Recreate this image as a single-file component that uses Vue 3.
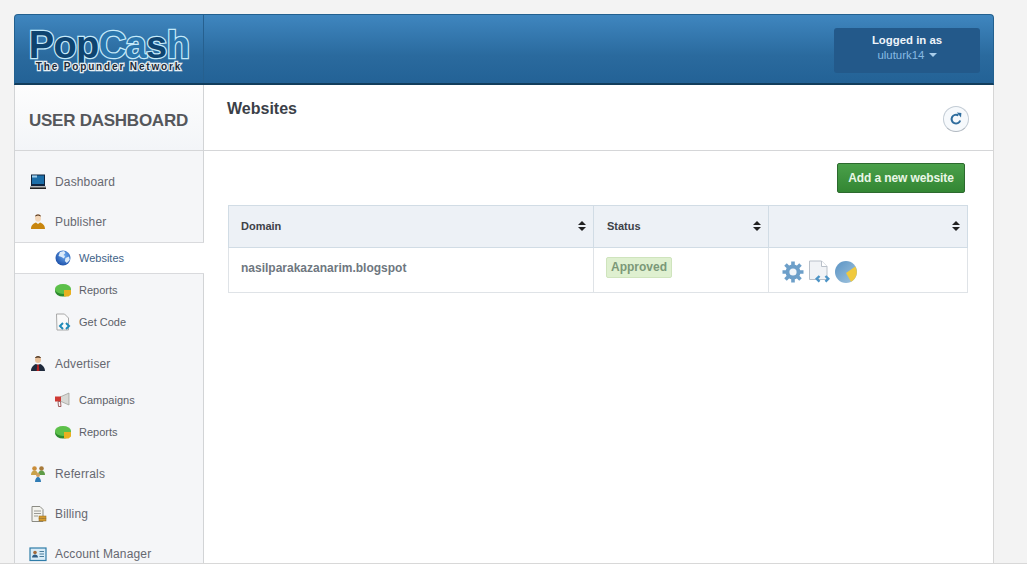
<script setup>
const nav = [
  { label: 'Dashboard', icon: 'dash' },
  { label: 'Publisher', icon: 'user', subs: [
    { label: 'Websites', icon: 'globe', active: true },
    { label: 'Reports', icon: 'pie' },
    { label: 'Get Code', icon: 'code' }
  ] },
  { label: 'Advertiser', icon: 'adv', subs: [
    { label: 'Campaigns', icon: 'horn' },
    { label: 'Reports', icon: 'pie' }
  ] },
  { label: 'Referrals', icon: 'ref' },
  { label: 'Billing', icon: 'bill' },
  { label: 'Account Manager', icon: 'card' }
]
</script>

<template>
  <div class="page">
    <svg class="defs" width="0" height="0" aria-hidden="true">
      <defs>
        <radialGradient id="globeFill" cx="60%" cy="35%" r="70%">
          <stop offset="0" stop-color="#6aa8ee"/>
          <stop offset="1" stop-color="#1c4fa8"/>
        </radialGradient>
        <linearGradient id="pieFill" x1="0" y1="0" x2="1" y2="1">
          <stop offset="0" stop-color="#5a93c4"/>
          <stop offset="1" stop-color="#a4c6df"/>
        </linearGradient>
      </defs>
    </svg>
    <div class="shell">
      <header class="top">
        <div class="brand">
          <div class="logo">
            <div class="logo-main"><span class="pop">Pop</span><span class="cash">Ca</span><span class="pop">s</span><span class="cash">h</span></div>
            <div class="logo-sub">The Popunder Network</div>
          </div>
        </div>
        <div class="top-fill">
          <div class="login">
            <div class="login-a">Logged in as</div>
            <div class="login-b">uluturk14 <span class="caret"></span></div>
          </div>
        </div>
      </header>
      <div class="body">
        <aside class="side">
          <div class="side-title">USER DASHBOARD</div>
          <nav class="nav">
            <template v-for="item in nav" :key="item.label">
              <div class="nav-item">
                <svg class="ico" width="18" height="18" viewBox="0 0 18 18">
                  <template v-if="item.icon === 'dash'">
                    <rect x="2" y="1.500" width="14" height="11.500" fill="#10253f"/>
                    <rect x="3" y="2.500" width="12" height="8.500" fill="#1c6ea8"/>
                    <rect x="3" y="2.500" width="5" height="2" fill="#9fd0ee"/>
                    <rect x="1" y="13.500" width="16" height="1" fill="#777"/>
                    <rect x="1" y="14.500" width="16" height="1.500" fill="#222"/>
                  </template>
                  <template v-else-if="item.icon === 'user'">
                    <ellipse cx="9" cy="5" rx="3" ry="3.800" fill="#f3d6b8"/>
                    <path d="M6 3.400C6.500 .8 11.500 .8 12 3.400L9 2.600Z" fill="#5a3a20"/>
                    <path d="M2 16c0-4 3-6 5-6.500l2 1.500 2-1.500c2 .5 5 2.500 5 6.500z" fill="#c8860f"/>
                  </template>
                  <template v-else-if="item.icon === 'adv'">
                    <ellipse cx="9" cy="4.500" rx="3" ry="3.500" fill="#e8c09a"/>
                    <path d="M6 3C6.500 .5 11.500 .5 12 3L9 2.400Z" fill="#3a2414"/>
                    <path d="M2 16c0-4 3-6.500 5-7l2 1 2-1c2 .5 5 3 5 7z" fill="#1f2a3c"/>
                    <path d="M8.200 9.500h1.600l.5 6.500H7.700z" fill="#b32020"/>
                  </template>
                  <template v-else-if="item.icon === 'ref'">
                    <circle cx="5.500" cy="3.500" r="2.300" fill="#c98d3a"/>
                    <circle cx="12.500" cy="3.500" r="2.300" fill="#a77a3a"/>
                    <path d="M2 10c0-3 1.500-4.500 3.500-4.500S9 7 9 10z" fill="#c9a24a"/>
                    <path d="M9 10c0-3 1.500-4.500 3.500-4.500S16 7 16 10z" fill="#5e9c48"/>
                    <circle cx="9" cy="10" r="2" fill="#d0a060"/>
                    <path d="M6 17c0-3 1.500-5 3-5s3 2 3 5z" fill="#2f7cb5"/>
                  </template>
                  <template v-else-if="item.icon === 'bill'">
                    <path d="M3 1.500h8l3 3v12H3z" fill="#f3f3ee" stroke="#8b8b84"/>
                    <path d="M5 6h7M5 8.500h7M5 11h4" stroke="#9a9a94"/>
                    <rect x="10" y="11" width="7" height="2.200" fill="#d59c32" stroke="#8e6416" stroke-width=".5"/>
                    <rect x="10" y="13.500" width="7" height="2.500" fill="#d59c32" stroke="#8e6416" stroke-width=".5"/>
                  </template>
                  <template v-else-if="item.icon === 'card'">
                    <rect x="1" y="3" width="16" height="12.500" fill="#d9ecf7" stroke="#2f7ca8" stroke-width="1.200"/>
                    <circle cx="6" cy="7.500" r="1.800" fill="#a36b3c"/>
                    <path d="M3 12.500c0-2 1.500-3 3-3s3 1 3 3z" fill="#2e5c84"/>
                    <path d="M10.500 6.500H15M10.500 9H15M10.500 11.500H15" stroke="#4b7d9c"/>
                  </template>
                </svg>
                <span>{{ item.label }}</span>
              </div>
              <div v-if="item.subs" class="subs">
                <div v-for="s in item.subs" :key="s.label" class="sub-item" :class="{ active: s.active }">
                  <svg class="ico" width="18" height="18" viewBox="0 0 18 18">
                    <template v-if="s.icon === 'globe'">
                      <circle cx="9" cy="9" r="7.500" fill="url(#globeFill)"/>
                      <path d="M6 3l4-1 1.500 2-2 2 1.500 1-1 2.500-2.500-1.500-3-1zM11.500 9l3.500-1.500.8 3.500-3 3-2-2z" fill="#dcebfa"/>
                    </template>
                    <template v-else-if="s.icon === 'pie'">
                      <ellipse cx="9" cy="10" rx="8" ry="5.500" fill="#2d8a2d"/>
                      <ellipse cx="9" cy="8" rx="8" ry="5" fill="#5cc04a"/>
                      <path d="M10 9h7v4.500l-2.500 2h-4.500z" fill="#e8b020"/>
                    </template>
                    <template v-else-if="s.icon === 'code'">
                      <path d="M2.500 1h8l4 4v12h-11.500z" fill="#fafafa" stroke="#a8a8a8"/>
                      <path d="M9 10l-3 3 3 3M12 10l3 3-3 3" fill="none" stroke="#1f8ab8" stroke-width="2"/>
                    </template>
                    <template v-else>
                      <path d="M6 6l9-4v12l-9-4z" fill="#d8d8d4" stroke="#9a9a94" stroke-width=".7"/>
                      <rect x="1" y="5.500" width="6" height="5" fill="#cf3a34"/>
                      <path d="M4 10.500h2.500l.5 5H4.500z" fill="none" stroke="#a06060"/>
                    </template>
                  </svg>
                  <span>{{ s.label }}</span>
                </div>
              </div>
            </template>
          </nav>
        </aside>
        <main class="main">
          <div class="head">
            <h1>Websites</h1>
            <button class="refresh" aria-label="Refresh">
              <svg width="14" height="14" viewBox="0 0 14 14">
                <path d="M11.200 8.500A4.400 4.400 0 1 1 9.400 3.400" fill="none" stroke="#2f6d9e" stroke-width="2"/>
                <path d="M7.800 .6l4.600.4-.4 4.600z" fill="#2f6d9e"/>
              </svg>
            </button>
          </div>
          <div class="content">
            <div class="actions"><button class="add">Add a new website</button></div>
            <table class="grid">
              <thead>
                <tr>
                  <th class="c1"><div class="th">Domain<span class="sort"></span></div></th>
                  <th class="c2"><div class="th">Status<span class="sort"></span></div></th>
                  <th class="c3"><div class="th"><span></span><span class="sort"></span></div></th>
                </tr>
              </thead>
              <tbody>
                <tr>
                  <td class="domain">nasilparakazanarim.blogspot</td>
                  <td class="state"><span class="badge">Approved</span></td>
                  <td class="tools">
                    <svg width="24" height="24" viewBox="0 0 24 24">
                      <g fill="#6d9fc9">
                        <circle cx="12" cy="12" r="7.500"/>
                        <g stroke="#6d9fc9" stroke-width="3.600">
                          <path d="M12 1.500v21M1.500 12h21M4.500 4.500l15 15M19.500 4.500l-15 15"/>
                        </g>
                      </g>
                      <circle cx="12" cy="12" r="3.600" fill="#f2f6fa"/>
                    </svg>
                    <svg width="24" height="24" viewBox="0 0 24 24">
                      <path d="M2.500 1h12l5.500 5.500v13H2.500z" fill="#f1f3f6" stroke="#b9c0c9"/>
                      <path d="M14.500 1v5.500H20" fill="#fff" stroke="#b9c0c9"/>
                      <path d="M12.500 16l-2.800 2.800 2.800 2.800M18.500 16l2.800 2.800-2.800 2.800" fill="none" stroke="#4d94c6" stroke-width="2.400"/>
                    </svg>
                    <svg width="24" height="24" viewBox="0 0 24 24">
                      <circle cx="12" cy="12" r="11" fill="url(#pieFill)"/>
                      <path d="M12 13l9.300-6.500A11 11 0 0 1 17 21.800z" fill="#f0c93e"/>
                    </svg>
                  </td>
                </tr>
              </tbody>
            </table>
          </div>
        </main>
      </div>
    </div>
  </div>
</template>

<style>
html, body { margin: 0; background: #f3f3f3; overflow: hidden; }
</style>

<style scoped>
.page {
  height: 564px;
  overflow: hidden;
  box-sizing: border-box;
  padding: 14px 0 0 14px;
  background: #f3f3f3;
  font-family: "Liberation Sans", Arial, sans-serif;
  border-bottom: 1px solid #d8d8d8;
}
.defs { position: absolute; }
.shell { width: 980px; }
.top {
  display: flex;
  height: 71px;
  box-sizing: border-box;
  background: linear-gradient(#3f86bf, #2a6a9e 60%, #236296);
  border: 1px solid #22608f;
  border-bottom: 2px solid #123d5c;
  border-radius: 4px 4px 0 0;
}
.brand {
  width: 188px;
  flex: none;
  border-right: 1px solid #26608f;
  display: flex;
  justify-content: center;
}
.logo { width: 165px; margin-top: 15px; text-align: center; }
.logo-main {
  font: bold 38px/30px "Liberation Sans", sans-serif;
  letter-spacing: -.6px;
  white-space: nowrap;
  height: 30px;
  paint-order: stroke fill;
  -webkit-text-stroke: 2.500px #c4eafa;
}
.pop { color: #0e4470; }
.cash { color: #2a76ad; }
.logo-sub {
  font: bold 10px/10px "Liberation Sans", sans-serif;
  letter-spacing: 1.850px;
  color: #1b2a38;
  paint-order: stroke fill;
  -webkit-text-stroke: 2.500px #e6eef2;
  white-space: nowrap;
  margin-top: 2px;
}
.top-fill {
  flex: 1;
  display: flex;
  justify-content: flex-end;
  padding: 13px 13px 0 0;
}
.login {
  width: 146px;
  height: 45px;
  box-sizing: border-box;
  background: #23598a;
  border-radius: 3px;
  text-align: center;
  padding-top: 4px;
}
.login-a { font: bold 11.400px/16px "Liberation Sans", sans-serif; color: #eef4fa; }
.login-b { font: 11.400px/14px "Liberation Sans", sans-serif; color: #87b9e3; }
.caret {
  display: inline-block;
  vertical-align: 2px;
  margin-left: 1px;
  border: 4px solid transparent;
  border-top-color: #a9cdea;
  border-bottom: 0;
}
.body { display: flex; }
.side {
  width: 188px;
  flex: none;
  height: 480px;
  background: #f5f6f8;
  border-left: 1px solid #d2d4d6;
  border-right: 1px solid #d2d4d6;
}
.side-title {
  height: 66px;
  box-sizing: border-box;
  padding-left: 14px;
  font: bold 17px/71px "Liberation Sans", sans-serif;
  letter-spacing: -.25px;
  color: #55575b;
  background: linear-gradient(#fdfdfd, #f3f5f8);
  border-bottom: 1px solid #d5d6d8;
  white-space: nowrap;
}
.nav { padding-top: 11px; }
.nav-item {
  display: flex;
  align-items: center;
  height: 40px;
  padding-left: 14px;
  font-size: 12px;
  letter-spacing: .15px;
  color: #666870;
}
.nav-item .ico { margin-right: 8px; }
.subs { padding-bottom: 6px; }
.sub-item {
  display: flex;
  align-items: center;
  height: 32px;
  box-sizing: border-box;
  padding-left: 39px;
  font-size: 11px;
  color: #5c5f68;
}
.sub-item .ico { margin-right: 7px; }
.sub-item.active {
  background: #fff;
  color: #3e6288;
  border-top: 1px solid #d9dadd;
  border-bottom: 1px solid #d9dadd;
  margin-right: -1px;
  position: relative;
}
.main {
  width: 790px;
  height: 480px;
  flex: none;
  box-sizing: border-box;
  background: #fff;
  border-right: 1px solid #d6d6d6;
}
.head {
  height: 66px;
  box-sizing: border-box;
  border-bottom: 1px solid #d5d6d8;
  display: flex;
  justify-content: space-between;
  padding: 14px 24px 0 23px;
}
h1 {
  margin: 0;
  font: bold 16px/20px "Liberation Sans", sans-serif;
  color: #3b3f48;
}
.refresh {
  width: 26px;
  height: 26px;
  margin-top: 7px;
  padding: 0;
  border: 1px solid #c3ccd5;
  border-bottom-color: #b1b8c0;
  border-radius: 50%;
  background: #f6f9fc;
  display: flex;
  align-items: center;
  justify-content: center;
}
.content { padding: 12px 25px 0 24px; }
.actions { display: flex; justify-content: flex-end; padding-right: 3px; }
.add {
  width: 128px;
  height: 30px;
  padding: 0;
  background: linear-gradient(#4aa04a, #338633);
  border: 1px solid #2c6a2e;
  border-radius: 2px;
  color: #eaf7e6;
  font: bold 12px "Liberation Sans", sans-serif;
  letter-spacing: -.1px;
}
.grid {
  width: 740px;
  margin-top: 12px;
  border-collapse: collapse;
  table-layout: fixed;
  font-family: "Liberation Sans", sans-serif;
}
.c1 { width: 365px; }
.c2 { width: 175px; padding-left: 13px; }
th {
  box-sizing: border-box;
  height: 42px;
  padding: 0 7px 2px 12px;
  background: #edf1f6;
  border: 1px solid #d1dce5;
  font: bold 11px "Liberation Sans", sans-serif;
  color: #3e4148;
  text-align: left;
}
th.c2 { padding-left: 13px; }
.th { display: flex; justify-content: space-between; align-items: center; padding-right: 4px; }
.sort {
  width: 0;
  height: 10px;
  position: relative;
}
.sort::before, .sort::after {
  content: "";
  position: absolute;
  left: -4px;
  border-left: 4px solid transparent;
  border-right: 4px solid transparent;
}
.sort::before { top: 0; border-bottom: 4px solid #222; }
.sort::after { bottom: 0; border-top: 4px solid #222; }
td {
  box-sizing: border-box;
  height: 45px;
  padding: 0 12px;
  border: 1px solid #dfe3e7;
  font-size: 12px;
  vertical-align: middle;
}
.domain { font-weight: bold; color: #6e7780; padding-bottom: 5px; }
.state { padding-bottom: 5px; }
.badge {
  display: inline-block;
  padding: 0 4px;
  height: 19px;
  line-height: 19px;
  background: #dff0d0;
  border: 1px solid #cfe4bd;
  border-radius: 2px;
  font-weight: bold;
  color: #7b9878;
}
.tools { padding: 3px 0 0 12px; }
.tools svg { vertical-align: middle; margin-right: 3px; }
.tools svg:first-child { margin-right: 2px; }
</style>
